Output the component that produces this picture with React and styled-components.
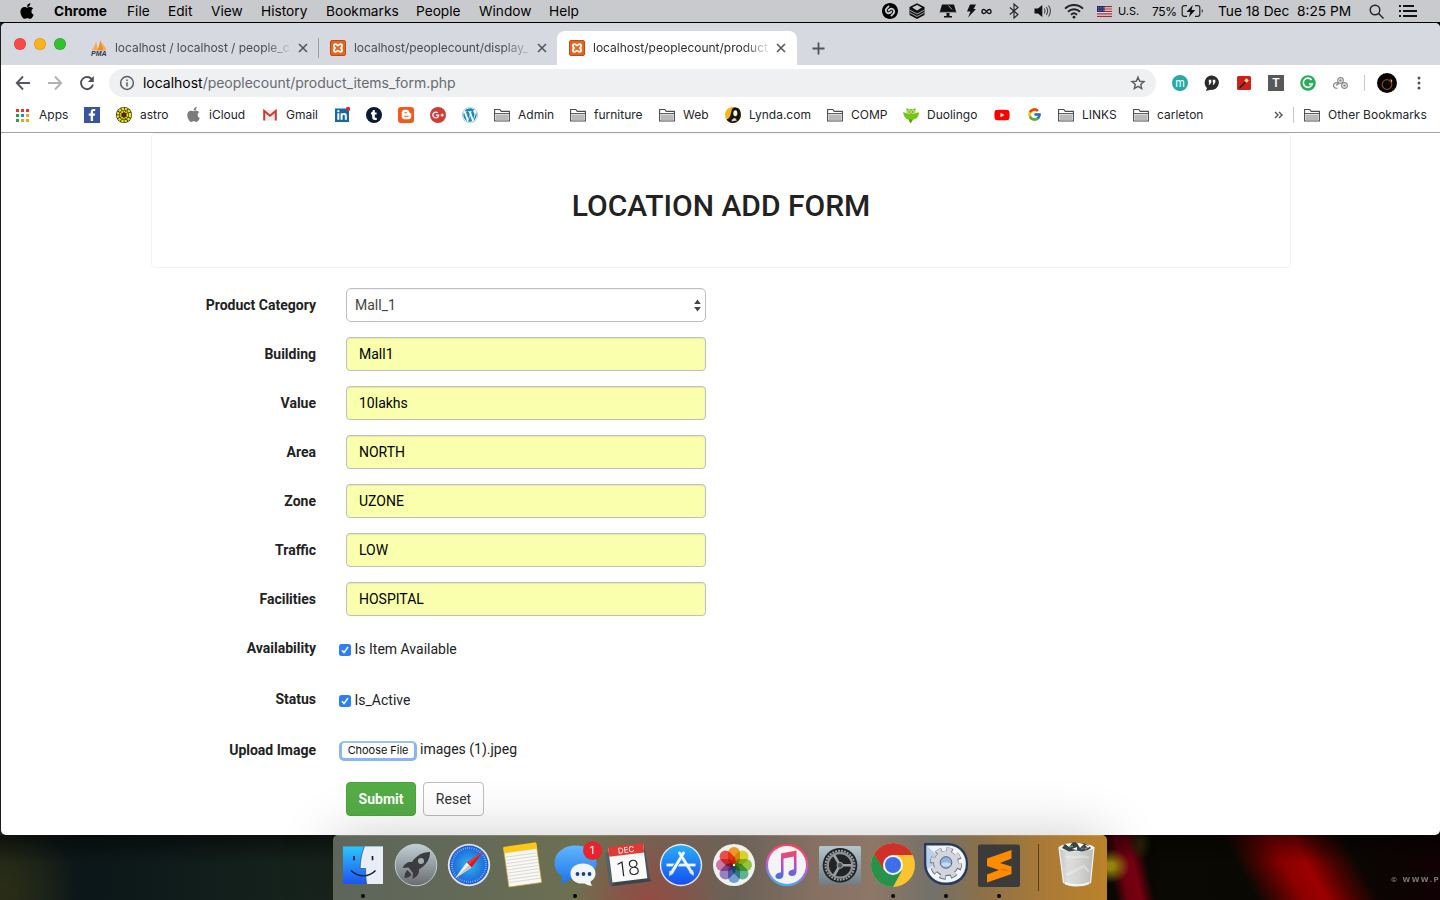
import React from 'react';
import styled, { createGlobalStyle } from 'styled-components';
import {
  FaApple, FaFacebookF, FaTumblr, FaBloggerB, FaGooglePlusG, FaWordpress, FaLinkedinIn, FaYoutube,
} from 'react-icons/fa';
import { FcGoogle } from 'react-icons/fc';
import { SiShazam } from 'react-icons/si';

const Global = createGlobalStyle`
  * { box-sizing: border-box; }
  html, body { margin: 0; padding: 0; overflow: hidden; }
  body { width: 1440px; height: 900px; font-family: Inter, "Liberation Sans", sans-serif; }
  svg { display: block; flex: none; overflow: visible; }
`;

/* ---------- desktop ---------- */
const Desktop = styled.div`
  width: 1440px;
  height: 900px;
  display: flex;
  flex-direction: column;
  overflow: hidden;
  background:
    linear-gradient(rgba(0, 0, 0, 0.5), transparent 100%) 0 835px / 100% 28px no-repeat,
    linear-gradient(61deg, transparent 22%, rgba(120, 0, 0, 0.6) 33%, #8e0000 44%, #9c0000 54%, rgba(120, 0, 0, 0.6) 66%, transparent 78%) 1210px 835px / 180px 65px no-repeat,
    radial-gradient(ellipse 20px 17px at 1110px 866px, #a08c10 20%, transparent),
    radial-gradient(ellipse 12px 18px at 1140px 842px, #3c350c, transparent),
    linear-gradient(78deg, transparent 22%, #6f0010 38%, #7a0012 56%, transparent 74%) 1100px 835px / 60px 65px no-repeat,
    radial-gradient(ellipse 75px 70px at 0 890px, #2b2e17, transparent),
    linear-gradient(90deg, #1a2019 0, #0b1718 80px, #0e1b1a 160px, #18241c 333px, #0a0903 1107px, #090803 1340px, #100003 1440px);
`;

/* ---------- menu bar ---------- */
const MenuBar = styled.header`
  height: 23px;
  flex: none;
  display: flex;
  align-items: center;
  padding-left: 18px;
  background: #c9cacd;
  border-bottom: 1px solid #000;
  color: #000;
`;
const MenuItem = styled.span`
  width: ${(p) => p.$w}px;
  flex: none;
  display: flex;
  align-items: center;
  white-space: pre;
  font-weight: ${(p) => (p.$bold ? 700 : 400)};
  font-size: ${(p) => p.$size || 13.7}px;
  letter-spacing: ${(p) => p.$ls || 0}px;
`;
const MenuRight = styled.div`
  display: flex;
  align-items: center;
  margin-left: auto;
`;

/* ---------- browser ---------- */
const Browser = styled.main`
  height: 812px;
  flex: none;
  margin-left: 1px;
  display: flex;
  flex-direction: column;
  background: #fff;
  border-radius: 5px;
  overflow: hidden;
`;
const TabStrip = styled.div`
  height: 42px;
  flex: none;
  display: flex;
  align-items: flex-end;
  background: #d6d9e0;
`;
const Lights = styled.div`
  width: 77px;
  height: 42px;
  padding-left: 13px;
  display: flex;
  align-items: center;
  gap: 8px;
`;
const Light = styled.i`
  width: 12px;
  height: 12px;
  border-radius: 50%;
  background: ${(p) => p.$c};
  box-shadow: inset 0 0 0 0.6px rgba(0, 0, 0, 0.18);
`;
const Tab = styled.div`
  width: ${(p) => p.$w}px;
  height: 34px;
  flex: none;
  display: flex;
  align-items: center;
  padding: 0 ${(p) => (p.$active ? 11 : 10)}px 0 ${(p) => p.$pl}px;
  background: ${(p) => (p.$active ? '#fff' : 'transparent')};
  border-radius: 8px 8px 0 0;
  color: ${(p) => (p.$active ? '#2b2d30' : '#484c52')};
  font-size: 12px;
`;
const TabTitle = styled.span`
  flex: 1;
  min-width: 0;
  margin: 0 5px 0 8px;
  white-space: nowrap;
  line-height: 18px;
  letter-spacing: ${(p) => p.$ls || 0}px;
  mask-image: linear-gradient(90deg, #000 84%, rgba(0, 0, 0, 0.15) 98%);
`;
const TabSeparator = styled.i`
  width: 1px;
  height: 20px;
  margin: 0 0 7px;
  background: #9b9ea5;
`;
const NewTab = styled.div`
  height: 34px;
  padding-left: 15px;
  display: flex;
  align-items: center;
`;
const Favicon = styled.span`
  width: 16px;
  height: 16px;
  flex: none;
  display: flex;
  align-items: center;
  justify-content: center;
  border-radius: ${(p) => p.$r || 0}px;
  background: ${(p) => p.$bg || 'transparent'};
  color: ${(p) => p.$fg || '#fff'};
`;

const Toolbar = styled.div`
  height: 36px;
  flex: none;
  display: flex;
  align-items: center;
  padding-left: 14px;
`;
const NavIcon = styled.span`
  width: 32px;
  display: flex;
  align-items: center;
`;
const Omnibox = styled.div`
  width: 1047px;
  height: 28px;
  margin-left: -2px;
  margin-right: 14px;
  padding: 0 10px;
  display: flex;
  align-items: center;
  border-radius: 14px;
  background: #eef0f2;
  color: #666b70;
  font-size: 14px;
`;
const Url = styled.span`
  flex: 1;
  margin-left: 8px;
  padding-bottom: 2px;
  letter-spacing: -0.02px;
  b { color: #000; font-weight: 400; }
`;
const ExtSlot = styled.span`
  width: ${(p) => p.$w || 32}px;
  height: 20px;
  flex: none;
  display: flex;
  align-items: center;
  justify-content: center;
`;
const Divider = styled.i`
  width: 1px;
  height: 16px;
  margin-left: ${(p) => p.$ml || 0}px;
  background: #c4c6c9;
`;
const Letter = styled.span`
  font-size: ${(p) => p.$size}px;
  font-weight: ${(p) => p.$weight || 400};
  line-height: 1;
`;

const Bookmarks = styled.nav`
  height: 32px;
  flex: none;
  display: flex;
  align-items: center;
  padding: 0 0 4px 13px;
  border-bottom: 1px solid #a3a3a3;
  color: #242528;
  font-size: 12px;
`;
const Bookmark = styled.span`
  width: ${(p) => p.$w}px;
  padding-left: ${(p) => p.$pl || 0}px;
  flex: none;
  display: flex;
  align-items: center;
  gap: ${(p) => p.$gap || 8}px;
  white-space: nowrap;
`;

/* ---------- page ---------- */
const Page = styled.div`
  flex: 1;
  padding-left: 150px;
  font-family: Roboto, sans-serif;
  font-size: 14px;
  color: #222;
`;
const Jumbo = styled.div`
  width: 1140px;
  height: 135px;
  display: flex;
  align-items: center;
  justify-content: center;
  padding-top: 10px;
  border: 1px solid #f4f4ec;
  border-radius: 4px;
`;
const Title = styled.h1`
  margin: 0;
  font-size: 30px;
  line-height: 33px;
  font-weight: 500;
  color: #222;
`;
const Form = styled.form`
  margin: 20px 0 0;
  display: flex;
  flex-direction: column;
`;
const Row = styled.div`
  height: 34px;
  margin-bottom: ${(p) => p.$mb ?? 15}px;
  display: flex;
  align-items: center;
`;
const Label = styled.label`
  width: 165px;
  flex: none;
  margin-right: ${(p) => p.$gap ?? 30}px;
  text-align: right;
  font-weight: 700;
`;
const Field = styled.input`
  width: 360px;
  height: 34px;
  padding: 6px 12px;
  border: 1px solid #bfbfbf;
  border-radius: 4px;
  background: #faffad;
  box-shadow: inset 0 1px 1px rgba(0, 0, 0, 0.08);
  color: #000;
  font: 14px/20px Roboto, sans-serif;
  outline: none;
`;
const SelectBox = styled.div`
  width: 360px;
  height: 34px;
  padding: 0 4px 0 8px;
  display: flex;
  align-items: center;
  justify-content: space-between;
  border: 1px solid #bfbfbf;
  border-radius: 5px;
  background: #fff;
  box-shadow: inset 0 1px 1px rgba(0, 0, 0, 0.06);
  color: #444;
`;
const CheckLine = styled.span`
  display: flex;
  align-items: center;
  gap: 3.5px;
  padding-top: 2px;
  svg { margin-top: 2px; }
`;
const FileButton = styled.button`
  width: 78px;
  height: 20px;
  margin: 1px 3px 0 0;
  padding: 1px 0 0;
  border: 3px solid #8ab6f3;
  border-top: 2px solid #9dc2f6;
  border-radius: 5px;
  background: #fff;
  color: #111;
  font: 11px/13px Inter, sans-serif;
  letter-spacing: -0.05px;
  white-space: nowrap;
`;
const FileName = styled.span`
  margin-top: -2px;
`;
const Button = styled.button`
  width: ${(p) => p.$w}px;
  height: 34px;
  margin-right: 7px;
  padding: 0;
  border: 1px solid ${(p) => (p.$primary ? '#4ea53f' : '#bdbdbd')};
  border-radius: 4px;
  background: ${(p) => (p.$primary ? '#54ad46' : '#fff')};
  color: ${(p) => (p.$primary ? '#fff' : '#333')};
  font: ${(p) => (p.$primary ? 700 : 400)} 14px/20px Roboto, sans-serif;
`;
const Actions = styled.div`
  display: flex;
  padding-left: 195px;
`;

/* ---------- dock ---------- */
const DockArea = styled.footer`
  height: 65px;
  flex: none;
  display: flex;
  justify-content: center;
  position: relative;
  z-index: 1;
`;
const Dock = styled.div`
  width: 774px;
  height: 65px;
  display: flex;
  padding: 6px 0 0 3.5px;
  border-radius: 5px 5px 0 0;
  box-shadow: 0 0 56px rgba(0, 0, 0, 0.2);
  background:
    linear-gradient(rgba(255, 255, 255, 0.16) 1px, transparent 1px),
    radial-gradient(ellipse 75px 60px at 315px 66px, rgba(155, 68, 62, 0.75), transparent),
    linear-gradient(90deg, #5e665c 0, #646a56 150px, #6e7050 250px, #785f50 320px, #6b6257 405px, #857062 480px, #8d7767 540px, #73716a 600px, #8c7048 650px, #a97a38 710px, #bb8229 774px);
`;
const DockItem = styled.div`
  width: ${(p) => p.$w || 53}px;
  flex: none;
  display: flex;
  flex-direction: column;
  align-items: center;
  gap: 5px;
  position: relative;
`;
const RunningDot = styled.i`
  width: 4px;
  height: 4px;
  border-radius: 50%;
  background: #000;
`;
const Badge = styled.span`
  position: absolute;
  top: 0;
  right: 0;
  width: 19px;
  height: 19px;
  border-radius: 50%;
  background: #e9232e;
  color: #fff;
  font-size: 11px;
  line-height: 19px;
  text-align: center;
`;
const DockRule = styled.i`
  width: 1px;
  height: 47px;
  margin: 3px 11.5px 0 12.5px;
  background: #5c3f16;
`;
const Watermark = styled.span`
  position: absolute;
  right: 0;
  top: 41px;
  color: #777;
  font: 700 7px "DejaVu Sans", sans-serif;
  letter-spacing: 1.4px;
  white-space: nowrap;
`;

/* ---------- small icons ---------- */
const Svg = ({ w = 16, h = w, vb = `0 0 ${w} ${h}`, children, ...rest }) => (
  <svg width={w} height={h} viewBox={vb} fill="none" {...rest}>{children}</svg>
);
const Close = () => (
  <Svg w={10} stroke="#54575c" strokeWidth="1.6"><path d="M1 1l8 8M9 1L1 9" /></Svg>
);
const Folder = () => (
  <Svg w={16}>
    <path d="M.6 14V2.500h5.200l1.400 1.900h8.200V14z" fill="#fff" stroke="#4b4b4d" strokeWidth="1.1" />
    <path d="M1.600 7.500h12.800V13H1.600z" fill="#b9b9bb" />
    <path d="M1 6.500h14" stroke="#4b4b4d" strokeWidth=".9" />
  </Svg>
);
const Xampp = () => (
  <Svg w={16}>
    <rect x=".5" y=".5" width="15" height="15" rx="1.500" fill="#e9661f" stroke="#b84c17" />
    <path d="M5 4.200c1.700-.6 2 1.200 3 1.200s1.300-1.800 3-1.200 1.200 2.800 0 3.800c1.200 1 1.700 3.200 0 3.800s-2-1.200-3-1.200-1.300 1.800-3 1.200-1.200-2.800 0-3.800c-1.200-1-1.700-3.200 0-3.800z" stroke="#fff" strokeWidth="1.800" />
  </Svg>
);
const Pma = () => (
  <Svg w={16}>
    <path d="M1 10.200C3 7.500 4.600 4 5 1.200l2 9z" fill="#f6a94c" />
    <path d="M6 10.400C8 7 9 4 9 0c2 4 3 7 3.400 10.400z" fill="#f28c1c" />
    <path d="M11 3c2 2 3.400 4.600 4.300 7.600l-2.700-.2z" fill="#f6a94c" />
    <text x="0" y="15.800" fontSize="7" fontWeight="700" fontStyle="italic" fill="#31335c" fontFamily="Liberation Sans, sans-serif">PMA</text>
  </Svg>
);
const AppsGrid = () => {
  const cols = ['#e0392c', '#e0392c', '#e0392c', '#2e9b4f', '#3f7de0', '#efa51c', '#2e9b4f', '#efa51c', '#efa51c'];
  return (
    <Svg w={16}>
      {cols.map((c, i) => <rect key={i} x={2 + (i % 3) * 5} y={2 + Math.floor(i / 3) * 5} width="3" height="3" fill={c} />)}
    </Svg>
  );
};
const Astro = () => (
  <Svg w={16}>
    <circle cx="8" cy="8" r="8" fill="#27260c" />
    <circle cx="8" cy="8" r="6.200" stroke="#e8e216" strokeWidth="2.400" strokeDasharray="2.500 .75" />
    <circle cx="8" cy="8" r="3.500" stroke="#e0da1a" strokeWidth="2" strokeDasharray="1.700 .5" />
    <circle cx="8" cy="8" r="1.800" fill="#7c1414" />
  </Svg>
);
const Gmail = () => (
  <Svg w={16}>
    <path d="M1.500 3h13v10.500h-13z" fill="#ececec" />
    <path d="M2.200 13.500V4L8 8.800 13.800 4v9.500" stroke="#d2392f" strokeWidth="2" />
  </Svg>
);
const Lynda = () => (
  <Svg w={16}>
    <circle cx="8" cy="8" r="8" fill="#f3b90e" />
    <path d="M1.500 12.500C7 11 5 4 8 1c6-2 8.500 3 7.700 8.500C15 13 12 16 8 16c-3 0-5-1.500-6.500-3.500z" fill="#17130e" />
    <ellipse cx="10.300" cy="6.300" rx="2" ry="3" fill="#f4efe6" />
    <path d="M6.500 14.500c0-2 2-3.500 3.500-3.500l2 2.500z" fill="#d8d2c8" />
  </Svg>
);
const Duo = () => (
  <Svg w={16}>
    <path d="M.3 5l3.500 1.600L3.400 1l3 1.600L8 2l1.700.6L12.600 1l-.4 5.600L15.800 5c.4 3-1 6-3.800 7l-2.500 1-2 2.600-1-2.600C2.500 12 .2 9 .3 5z" fill="#74c615" />
    <circle cx="6" cy="5" r="1.900" fill="#c5ea7a" /><circle cx="10" cy="5" r="1.900" fill="#c5ea7a" />
    <circle cx="6.200" cy="5" r=".7" fill="#426b12" /><circle cx="9.800" cy="5" r=".7" fill="#426b12" />
    <path d="M7 6h2l-1 2z" fill="#f29422" />
    <path d="M5.500 12.500h4.500l-2.500 4z" fill="#5c9a13" />
  </Svg>
);
const Flag = () => (
  <Svg w={15} h={11}>
    <path d="M0 0h15v11H0z" fill="#e6dede" />
    <path d="M0 .6h15M0 3h15M0 5.400h15M0 7.800h15M0 10.300h15" stroke="#9e2c35" strokeWidth="1.200" />
    <path d="M0 0h7.500v6H0z" fill="#23286a" />
    <path d="M1 1.500h6M1 3h6M1 4.500h6" stroke="#aab" strokeWidth=".6" strokeDasharray=".8 .9" />
  </Svg>
);
const Wifi = () => (
  <Svg w={20} h={16} stroke="#222" strokeWidth="1.900">
    <path d="M1 5.600c5-4.900 13-4.900 18 0M4 8.700c3.400-3.200 8.600-3.200 12 0M7 11.700c1.800-1.700 4.200-1.700 6 0" />
    <circle cx="10" cy="14.200" r="1.400" fill="#222" stroke="none" />
  </Svg>
);
const Volume = () => (
  <Svg w={17} h={14}>
    <path d="M.5 4.500H4L8.300 1v12L4 9.500H.5z" fill="#111" />
    <path d="M10.300 4.500c1 1.600 1 3.400 0 5M12.300 3c1.700 2.500 1.700 5.500 0 8M14.500 1.500c2.400 3.400 2.400 7.600 0 11" stroke="#444" strokeWidth="1.100" />
  </Svg>
);
const Battery = () => (
  <Svg w={23} h={14}>
    <path d="M6 1.700H3.200A2 2 0 0 0 1.200 3.700v6.600a2 2 0 0 0 2 2H6M14 1.700h2.800a2 2 0 0 1 2 2v6.600a2 2 0 0 1-2 2H14" stroke="#222" strokeWidth="1.200" />
    <path d="M11.800 1L5.500 8h3.800l-1.500 5.200L14.300 6h-3.800z" fill="#111" />
    <path d="M20.800 5c1.500 1 1.500 3 0 4z" fill="#222" />
  </Svg>
);

/* ---------- dock icons: 48 x 48 ---------- */
const Finder = () => (
  <Svg w={48}>
    <defs><linearGradient id="fb" x2="0" y2="1"><stop stopColor="#2cc5fb" /><stop offset="1" stopColor="#1b55f2" /></linearGradient></defs>
    <path d="M4 5.500h40V43H4z" fill="url(#fb)" />
    <path d="M25.500 5.500H44V43H27.700c-.8-4-1.200-10-1.100-15.500H21.200c0-7.500 1.300-15 4.300-22z" fill="#e9eef6" />
    <path d="M25.500 5.500c-3 7-4.300 14.500-4.300 22h5.400c-.1 5.500.3 11.500 1.100 15.500" stroke="#1c3d70" strokeWidth=".6" />
    <path d="M12 29.500c7 7 18 7 24.500 0" stroke="#0c1f3c" strokeWidth="1.500" />
    <path d="M15 15v4.200M33.500 15v4.200" stroke="#0c1f3c" strokeWidth="1.700" />
  </Svg>
);
const Launchpad = () => (
  <Svg w={48}>
    <defs><linearGradient id="lp" x2="0" y2="1"><stop stopColor="#bfd0d6" /><stop offset="1" stopColor="#6a6b6e" /></linearGradient></defs>
    <circle cx="24" cy="24" r="20.800" fill="url(#lp)" stroke="#c4cbce" />
    <path d="M38 11c-8 0-14 4-18 10-4-.5-7 1-9.500 6l6-.5 4.500 5.500-.5 6c5-2.500 7-5.500 6.500-9.500 7-4.500 11-9.500 11-17.500z" fill="#3a3c3f" />
    <path d="M15.500 29c-2.500 1.500-3 5-3 8 3 0 6-1 7-3.500z" fill="#3a3c3f" />
    <circle cx="29" cy="20" r="3" fill="#a4aeb2" />
  </Svg>
);
const Safari = () => (
  <Svg w={48}>
    <defs><radialGradient id="sf"><stop stopColor="#2fb8ee" /><stop offset="1" stopColor="#1d5ed9" /></radialGradient></defs>
    <circle cx="24" cy="24" r="21.200" fill="#e3e6ea" />
    <circle cx="24" cy="24" r="19.400" fill="url(#sf)" />
    <circle cx="24" cy="24" r="17" stroke="#a7d3f7" strokeWidth="2" strokeDasharray=".6 1.625" />
    <path d="M38 10.500L21.500 21.500l5 5z" fill="#f03434" />
    <path d="M38 10.500L24 24l2.500 2.500z" fill="#c71f28" />
    <path d="M10 37.500l11.500-16 5 5z" fill="#f4f4f4" />
    <path d="M10 37.500L24 24l2.500 2.500z" fill="#c4c8cc" />
  </Svg>
);
const Notes = () => (
  <Svg w={48}>
    <g transform="rotate(-8 24 24)">
      <path d="M8 5h33v39H8z" fill="#f9f8f5" stroke="#c5a838" strokeWidth=".7" />
      <path d="M8 3.500h33V10H8z" fill="#fbc817" />
      <path d="M8.500 14H40M8.500 17.200H40M8.500 20.400H40M8.500 23.600H40M8.500 26.800H40M8.500 30H40M8.500 33.200H40M8.500 36.400H40M8.500 39.600H40" stroke="#cdcdcd" strokeWidth=".7" />
    </g>
  </Svg>
);
const Messages = () => (
  <Svg w={48}>
    <defs><linearGradient id="ms" x2="0" y2="1"><stop stopColor="#62b6fb" /><stop offset="1" stopColor="#1c75ec" /></linearGradient></defs>
    <g transform="translate(.5 0)">
      <path d="M24 4.500C12 4.500 3 12 3 22c0 6 3 10.500 8 13.500 0 3-1 5-2.500 7 5-.5 7.500-2.500 10-4.500C33 40.500 45 33.500 45 22S36 4.500 24 4.500z" fill="url(#ms)" />
      <path d="M31.500 22.500c-7.500 0-12.500 4.200-12.500 10.200 0 6.500 6 10.700 14 9.800 2.500 1.500 5 2.500 8 2-1.300-1-2-2.500-2-4 3-2 5-4.500 5-7.800 0-6-5-10.200-12.500-10.200z" fill="#f1f5fa" />
      <g fill="#1e3f88"><circle cx="26" cy="33" r="1.900" /><circle cx="32" cy="33" r="1.900" /><circle cx="38" cy="33" r="1.900" /></g>
    </g>
  </Svg>
);
const Calendar = () => (
  <Svg w={48}>
    <g transform="rotate(-7 24 24)">
      <path d="M5 38.500h38.500l2 4.500H4.500z" fill="#3b434b" /><path d="M6.500 7l-3.500 3v31l3.500 2z" fill="#56606a" /><path d="M40 6l2.500 3 2 33-4.500-3z" fill="#4b545c" />
      <path d="M6.500 5h35v34.500h-35z" fill="#fafafa" />
      <path d="M6.500 4h35v9.500h-35z" fill="#df3a35" />
      <text x="24" y="11.700" fontSize="8" textAnchor="middle" fill="#fff" fontFamily="Inter, sans-serif">DEC</text>
      <text x="23.500" y="34.500" fontSize="21" textAnchor="middle" fill="#222" fontFamily="Roboto, sans-serif" fontWeight="300">18</text>
    </g>
  </Svg>
);
const AppStore = () => (
  <Svg w={48}>
    <defs><linearGradient id="as" x2="0" y2="1"><stop stopColor="#27aef8" /><stop offset="1" stopColor="#174df0" /></linearGradient></defs>
    <circle cx="24" cy="24" r="21.200" fill="#e6e9ef" /><circle cx="24" cy="24" r="19.800" fill="url(#as)" />
    <path d="M9.500 24h29" stroke="#f1f5fb" strokeWidth="2.800" />
    <path d="M26.500 12L14 32.500" stroke="#2387f5" strokeWidth="4.600" />
    <g stroke="#f1f5fb" strokeWidth="3" strokeLinecap="round">
      <path d="M26.500 12L14.500 32M22.500 12L35 32" />
    </g>
    <path d="M12.500 29.500l4 2.500-4.500 3.500zM32 31l4-2 1 6z" fill="#dbe6f6" />
  </Svg>
);
const Photos = () => {
  const petals = ['#fb9a1c', '#e2dc18', '#98cc3c', '#58b994', '#70a3e2', '#9880c8', '#d275ac', '#f5483c'];
  return (
    <Svg w={48}>
      <circle cx="24" cy="24" r="21" fill="#f0f0ee" />
      {petals.map((c, i) => (
        <rect key={c} x="18" y="6" width="12" height="18" rx="6" fill={c} fillOpacity=".92" transform={`rotate(${i * 45} 24 24)`} style={{ mixBlendMode: 'multiply' }} />
      ))}
      <circle cx="24" cy="24" r="1.200" fill="#fff" />
    </Svg>
  );
};
const ITunes = () => (
  <Svg w={48}>
    <defs>
      <linearGradient id="it" x1=".6" x2=".4" y2="1"><stop stopColor="#fa3c50" /><stop offset=".35" stopColor="#f0509a" /><stop offset=".6" stopColor="#a466e8" /><stop offset="1" stopColor="#38b6f5" /></linearGradient>
      <linearGradient id="nt" x2="0" y2="1"><stop stopColor="#f6485c" /><stop offset=".5" stopColor="#b94bc6" /><stop offset="1" stopColor="#3577e8" /></linearGradient>
    </defs>
    <circle cx="24" cy="24" r="21.300" fill="url(#it)" /><circle cx="24" cy="24" r="19" fill="#f4f4f8" />
    <path d="M18 12.500l15.500-3v21c0 3-2 4.500-4.500 4.500s-4-1.500-3.500-3.500 3-2.800 5.500-3.200V15.500L20.500 17.500v16c0 3-2 4.500-4.500 4.500s-4-1.500-3.500-3.500 3-2.800 5.500-3.200z" fill="url(#nt)" />
  </Svg>
);
const Preferences = () => (
  <Svg w={48}>
    <defs><linearGradient id="pf" x2="0" y2="1"><stop stopColor="#b4c6d0" /><stop offset="1" stopColor="#717b82" /></linearGradient></defs>
    <rect x="3" y="5" width="42" height="39" rx="1.500" fill="url(#pf)" />
    <circle cx="24" cy="24.300" r="17.300" fill="#222325" />
    <circle cx="24" cy="24.300" r="14.500" stroke="#a3a6a8" strokeWidth="2" strokeDasharray="1.800 1.200" />
    <circle cx="24" cy="24.300" r="12.300" stroke="#8d9093" strokeWidth="2.400" />
    <path d="M24 24.300h12M24 24.300L18 14M24 24.300L18 34.500" stroke="#a0a3a5" strokeWidth="2.600" />
    <circle cx="24" cy="24.300" r="3" fill="#55585a" stroke="#a0a3a5" />
  </Svg>
);
const ChromeIcon = () => (
  <Svg w={48}>
    <circle cx="24" cy="24" r="22" fill="#f9c42d" />
    <path d="M24 14H43.700A22 22 0 0 0 4.950 13L14 28z" fill="#cf3029" />
    <path d="M4.950 13A22 22 0 0 0 24 46l9-16.500-9 4-8.500-4z" fill="#279249" />
    <circle cx="24" cy="24" r="10" fill="#f4f5f5" /><circle cx="24" cy="24" r="8" fill="#3d6fe8" />
  </Svg>
);
const GearApp = () => (
  <Svg w={48}>
    <path d="M2 2h24a20 20 0 0 1 20 20v2a20 20 0 0 1-20 20h-3A21 21 0 0 1 2 24z" fill="#28395b" />
    <path d="M4.500 4.500H26A17.800 17.800 0 0 1 43.800 22v1.500A18 18 0 0 1 26 41.500h-3A18.500 18.500 0 0 1 4.500 24z" fill="#f0f5fd" />
    <path d="M4.500 4.500L22 20 5 28z" fill="#bcd0ee" />
    <circle cx="24" cy="22.500" r="13.500" stroke="#6c707c" strokeWidth="5.400" strokeDasharray="6 4.603" />
    <circle cx="24" cy="22.500" r="9.200" stroke="#6c707c" strokeWidth="7" />
    <circle cx="24" cy="22" r="13.300" stroke="#d3d5dc" strokeWidth="4.600" strokeDasharray="4.900 5.546" strokeDashoffset="-.4" />
    <circle cx="24" cy="22" r="8.900" stroke="#d3d5dc" strokeWidth="6.200" />
    <circle cx="24" cy="21.500" r="5.800" fill="#8fb1e6" stroke="#5c6070" />
    <path d="M19 23a5.500 4.500 0 0 0 10 0 6 4 0 0 0-10 0z" fill="#c9dcf7" />
  </Svg>
);
const Sublime = () => (
  <Svg w={48}>
    <rect x="3" y="3.500" width="42" height="42.500" rx="2" fill="#3b3b3c" />
    <path d="M12 17.500L36.500 9v8.500L25 22l11.500 3.500V33L12 41.500v-8L24 29l-12-4z" fill="#ff8c00" />
    <path d="M36 31l-12-2 5-1.500z" fill="#e27600" />
  </Svg>
);
const Trash = () => (
  <Svg w={48}>
    <defs><linearGradient id="tr"><stop stopColor="#c2c3c2" /><stop offset=".25" stopColor="#dededd" /><stop offset=".6" stopColor="#d2d2d1" /><stop offset="1" stopColor="#babbb9" /></linearGradient></defs>
    <path d="M6 6h35l-3.500 36c-3 4.500-24 4.500-27 0z" fill="url(#tr)" />
    <path d="M6 6l4.500 36M41 6l-3.500 36" stroke="#f6f6f6" strokeWidth="1.200" />
    <ellipse cx="23.500" cy="6.500" rx="17.500" ry="4" fill="#f2f2f1" />
    <path d="M9 7l3-4 5 0 4-2 5 2 4-1 5 2 3 3-3 2-6 1.500-6-1-7 1z" fill="#3d4448" />
    <path d="M12 3l4 3 3-4zM24 2l3 5 4-4zM19 8l5-2v3zM32 4l3 3 2-2z" fill="#fff" />
    <path d="M16 6l4-1" stroke="#37b27c" strokeWidth="1.600" /><path d="M28 8l3-1" stroke="#3f78c9" strokeWidth="1.500" /><path d="M32 8l2-1" stroke="#d67d3d" strokeWidth="1.500" />
    <path d="M12 15c8 5 14-3 24 2M13 34l18-9 5 6" stroke="#fff" strokeOpacity=".28" strokeWidth="2.600" />
    <path d="M12 42c6 3 17 3 24 0" stroke="#f3f3f3" strokeWidth="2" />
  </Svg>
);

const dock = [
  [Finder, true], [Launchpad], [Safari], [Notes], [Messages, true, 1], [Calendar], [AppStore], [Photos],
  [ITunes], [Preferences], [ChromeIcon, true], [GearApp, true], [Sublime, true],
];
const menus = [['Chrome', 73, true], ['File', 41], ['Edit', 43], ['View', 50], ['History', 65], ['Bookmarks', 90], ['People', 63], ['Window', 70], ['Help', 40]];
const fields = [['Building', 'Mall1'], ['Value', '10lakhs'], ['Area', 'NORTH'], ['Zone', 'UZONE'], ['Traffic', 'LOW'], ['Facilities', 'HOSPITAL']];
const marks = [
  [<AppsGrid />, 'Apps', 70, 9],
  [<Favicon $bg="#3a559f"><FaFacebookF size={12} /></Favicon>, '', 32],
  [<Astro />, 'astro', 69],
  [<Favicon $fg="#7b7b7b"><FaApple size={17} /></Favicon>, 'iCloud', 77],
  [<Gmail />, 'Gmail', 72],
  [<Svg w={16}><path d="M1 1.500h14V15H1z" fill="#1467a8" /><circle cx="14" cy="2" r="2.200" fill="#e5252c" /><FaLinkedinIn x="2.500" y="3" size={11} color="#fff" /></Svg>, '', 32],
  [<Favicon $bg="#0b1a30" $r={8}><FaTumblr size={10} /></Favicon>, '', 32],
  [<Favicon $bg="#f4581b" $r={3}><FaBloggerB size={11} /></Favicon>, '', 32],
  [<Favicon $bg="#cf3b35" $r={8}><FaGooglePlusG size={12} /></Favicon>, '', 32],
  [<Favicon $fg="#1a87bd"><FaWordpress size={16} /></Favicon>, '', 32],
  [<Folder />, 'Admin', 76],
  [<Folder />, 'furniture', 89],
  [<Folder />, 'Web', 66],
  [<Lynda />, 'Lynda.com', 102],
  [<Folder />, 'COMP', 76],
  [<Duo />, 'Duolingo', 91],
  [<Favicon $fg="#f00"><FaYoutube size={16} /></Favicon>, '', 32],
  [<Favicon><FcGoogle size={15} /></Favicon>, '', 32],
  [<Folder />, 'LINKS', 75],
  [<Folder />, 'carleton', 141],
];

const Checkbox = () => (
  <Svg w={12}>
    <rect width="12" height="12" rx="2.500" fill="#2d7ff6" />
    <path d="M3 6.300l2 2.300 4-5.600" stroke="#fff" strokeWidth="1.500" />
  </Svg>
);

export default function App() {
  return (
    <Desktop>
      <Global />
      <MenuBar>
        <MenuItem $w={36}><FaApple size={18} /></MenuItem>
        {menus.map(([t, w, b]) => <MenuItem key={t} $w={w} $bold={b}>{t}</MenuItem>)}
        <MenuRight>
          <MenuItem $w={27}><SiShazam size={16} /></MenuItem>
          <MenuItem $w={30}>
            <Svg w={16}>
              <path d="M8 .3l7.500 3.700v8L8 16 .5 12V4z" fill="#111" />
              <path d="M8 2l4.800 2.600L8 7.400 3.200 4.600z" fill="#c9cacd" />
              <path d="M1 7.300L8 11l7-3.700M1 9.800l7 3.700 7-3.700" stroke="#c9cacd" strokeWidth=".8" />
            </Svg>
          </MenuItem>
          <MenuItem $w={27}>
            <Svg w={18} h={16}>
              <path d="M3 1.500h12l2.500 8.500H.5zM7.500 10h3v3h2.500v1.500H5V13h2.500z" fill="#111" /><path d="M9.500 2.500l3.500 4M.5 9.400h17" stroke="#c9cacd" strokeWidth=".8" />
            </Svg>
          </MenuItem>
          <MenuItem $w={15}><Svg w={11} h={14}><path d="M4 .5h6L7.500 5H10L2 13.500 4.500 7.500H1z" fill="#111" /></Svg></MenuItem>
          <MenuItem $w={28}><Svg w={11} h={7} stroke="#111" strokeWidth="1.400"><path d="M5.500 3.500C4 1 1 .5 1 3.500s3 2.500 4.500 0 4.500-3 4.500 0-3 2.500-4.500 0z" /></Svg></MenuItem>
          <MenuItem $w={25}><Svg w={10} h={16} stroke="#222" strokeWidth="1.100"><path d="M.8 4.500L9 11.500 5 15V1l4 3.500-8.200 7" /></Svg></MenuItem>
          <MenuItem $w={30}><Volume /></MenuItem>
          <MenuItem $w={33}><Wifi /></MenuItem>
          <MenuItem $w={21}><Flag /></MenuItem>
          <MenuItem $w={34} $size={11}>U.S.</MenuItem>
          <MenuItem $w={29} $size={12} $ls={-0.3}>75%</MenuItem>
          <MenuItem $w={37}><Battery /></MenuItem>
          <MenuItem $w={79}>Tue 18 Dec</MenuItem>
          <MenuItem $w={72}>8:25 PM</MenuItem>
          <MenuItem $w={30}><Svg w={15} stroke="#222" strokeWidth="1.400"><circle cx="6" cy="6" r="4.800" /><path d="M9.600 9.600l4.900 4.900" /></Svg></MenuItem>
          <MenuItem $w={41}>
            <Svg w={18} h={12} stroke="#111" strokeWidth="1.800"><path d="M0 1h2M0 6h2M0 11h2M4 1h11M4 6h14M4 11h14" /></Svg>
          </MenuItem>
        </MenuRight>
      </MenuBar>

      <Browser>
        <TabStrip>
          <Lights><Light $c="#fb4a45" /><Light $c="#fdb11c" /><Light $c="#31c32b" /></Lights>
          <Tab $w={240} $pl={13}><Pma /><TabTitle $ls={-0.04}>localhost / localhost / people_c</TabTitle><Close /></Tab>
          <TabSeparator />
          <Tab $w={238} $pl={11}><Xampp /><TabTitle $ls={-0.04}>localhost/peoplecount/display_</TabTitle><Close /></Tab>
          <Tab $w={240} $pl={12} $active><Xampp /><TabTitle>localhost/peoplecount/product</TabTitle><Close /></Tab>
          <NewTab><Svg w={13} stroke="#505358" strokeWidth="1.800"><path d="M6.500 .5v12M.5 6.500h12" /></Svg></NewTab>
        </TabStrip>

        <Toolbar>
          <NavIcon><Svg w={16} stroke="#55585d" strokeWidth="1.900"><path d="M15 8H2M8 1.500L1.800 8 8 14.500" /></Svg></NavIcon>
          <NavIcon><Svg w={16} stroke="#b0b2b5" strokeWidth="1.900"><path d="M1 8h13M8 1.500L14.200 8 8 14.500" /></Svg></NavIcon>
          <NavIcon>
            <Svg w={16}><path d="M13.500 5.200A6.100 6.100 0 1 0 14 9.600" stroke="#505358" strokeWidth="1.900" /><path d="M14.800 1v6h-6z" fill="#505358" /></Svg>
          </NavIcon>
          <Omnibox>
            <Svg w={16} stroke="#5a5d62" strokeWidth="1.500"><circle cx="8" cy="8" r="6.400" /><path d="M8 7.200v4.200M8 4.400v1.600" /></Svg>
            <Url><b>localhost</b>/peoplecount/product_items_form.php</Url>
            <Svg w={16} stroke="#5a5d62" strokeWidth="1.400"><path d="M8 2.200l1.700 4.100 4.300.3-3.300 2.800 1 4.200L8 11.400l-3.700 2.200 1-4.200L2 6.600l4.300-.3z" /></Svg>
          </Omnibox>
          <ExtSlot $w={20}><Favicon $bg="#27aaa4" $r={8}><Letter $size={11}>m</Letter></Favicon></ExtSlot>
          <ExtSlot $w={44}>
            <Svg w={16}><path d="M8 .5a7.200 7.200 0 1 1-1.500 14.300L2 16l1-3A7.200 7.200 0 0 1 8 .5z" fill="#2b2b2d" /><path d="M4.800 4.800h2.500v2.600L5.600 9.800h-1l.8-2.200h-.6zM8.800 4.800h2.500v2.600L9.600 9.800h-1l.8-2.200h-.6z" fill="#fff" /></Svg>
          </ExtSlot>
          <ExtSlot $w={20}>
            <Svg w={14}><rect width="14" height="14" rx="1.500" fill="#cf2119" /><path d="M2.500 12l7-7" stroke="#222" strokeWidth="1.700" /><path d="M9.500 2.500v4M7.500 4.500h4" stroke="#ffe9a8" strokeWidth="1.200" /><path d="M8 3l3 3M11 3L8 6" stroke="#ffd27a" strokeWidth=".8" /></Svg>
          </ExtSlot>
          <ExtSlot $w={44}><Favicon $bg="#57585a"><Letter $size={12} $weight={600}>T</Letter></Favicon></ExtSlot>
          <ExtSlot $w={20}>
            <Svg w={16}><circle cx="8" cy="8" r="7.800" fill="#27ae5c" /><path d="M11.600 5A4.600 4.600 0 1 0 12.300 9H9" stroke="#fff" strokeWidth="1.600" /></Svg>
          </ExtSlot>
          <ExtSlot $w={44}>
            <Svg w={16} h={12} stroke="#88898b" strokeWidth="1.200"><circle cx="8.500" cy="3.500" r="2.800" /><path d="M5.500 11a2.800 2.800 0 1 1 1.500-3.500" /><circle cx="12.500" cy="8.500" r="2.800" /><circle cx="8.500" cy="3.500" r=".7" /><circle cx="12.500" cy="8.500" r=".7" /><path d="M4 8.500l2.500-2.500" /></Svg>
          </ExtSlot>
          <Divider $ml={2} />
          <ExtSlot $w={44}>
            <Svg w={20}><circle cx="10" cy="10" r="10" fill="#080504" /><circle cx="10" cy="11.500" r="4.800" stroke="#86481c" strokeWidth="1.200" /><path d="M13.500 5.500l2 2.500-1.500 1.500z" fill="#ffb35c" /></Svg>
          </ExtSlot>
          <ExtSlot $w={20}><Svg w={4} h={14}><g fill="#505358"><circle cx="2" cy="2" r="1.500" /><circle cx="2" cy="7" r="1.500" /><circle cx="2" cy="12" r="1.500" /></g></Svg></ExtSlot>
        </Toolbar>

        <Bookmarks>
          {marks.map(([icon, t, w, gap], i) => <Bookmark key={i} $w={w} $gap={gap}>{icon}{t && <span>{t}</span>}</Bookmark>)}
          <Bookmark $w={19}><Svg w={10} h={8} stroke="#505358" strokeWidth="1.400"><path d="M1 1l3 3-3 3M5 1l3 3-3 3" /></Svg></Bookmark>
          <Divider />
          <Bookmark $w={135} $pl={10}><Folder /><span>Other Bookmarks</span></Bookmark>
        </Bookmarks>

        <Page>
          <Jumbo><Title>LOCATION ADD FORM</Title></Jumbo>
          <Form onSubmit={(e) => e.preventDefault()}>
            <Row>
              <Label>Product Category</Label>
              <SelectBox>
                <span>Mall_1</span>
                <Svg w={7} h={13}><path d="M3.500 .5L6.800 5H.2zM3.500 12.500L6.800 8H.2z" fill="#444" /></Svg>
              </SelectBox>
            </Row>
            {fields.map(([l, v]) => (
              <Row key={l}><Label>{l}</Label><Field defaultValue={v} /></Row>
            ))}
            <Row $mb={17}><Label $gap={23}>Availability</Label><CheckLine><Checkbox /><span>Is Item Available</span></CheckLine></Row>
            <Row $mb={17}><Label $gap={23}>Status</Label><CheckLine><Checkbox /><span>Is_Active</span></CheckLine></Row>
            <Row $mb={15}><Label $gap={23}>Upload Image</Label><FileButton type="button">Choose File</FileButton><FileName>images (1).jpeg</FileName></Row>
            <Actions>
              <Button $w={70} $primary>Submit</Button>
              <Button $w={61} type="reset">Reset</Button>
            </Actions>
          </Form>
        </Page>
      </Browser>

      <DockArea>
        <Dock>
          {dock.map(([Icon, running, badge], i) => (
            <DockItem key={i}>
              <Icon />
              {running && <RunningDot />}
              {badge && <Badge>{badge}</Badge>}
            </DockItem>
          ))}
          <DockRule />
          <DockItem><Trash /></DockItem>
        </Dock>
        <Watermark>© WWW.P</Watermark>
      </DockArea>
    </Desktop>
  );
}
